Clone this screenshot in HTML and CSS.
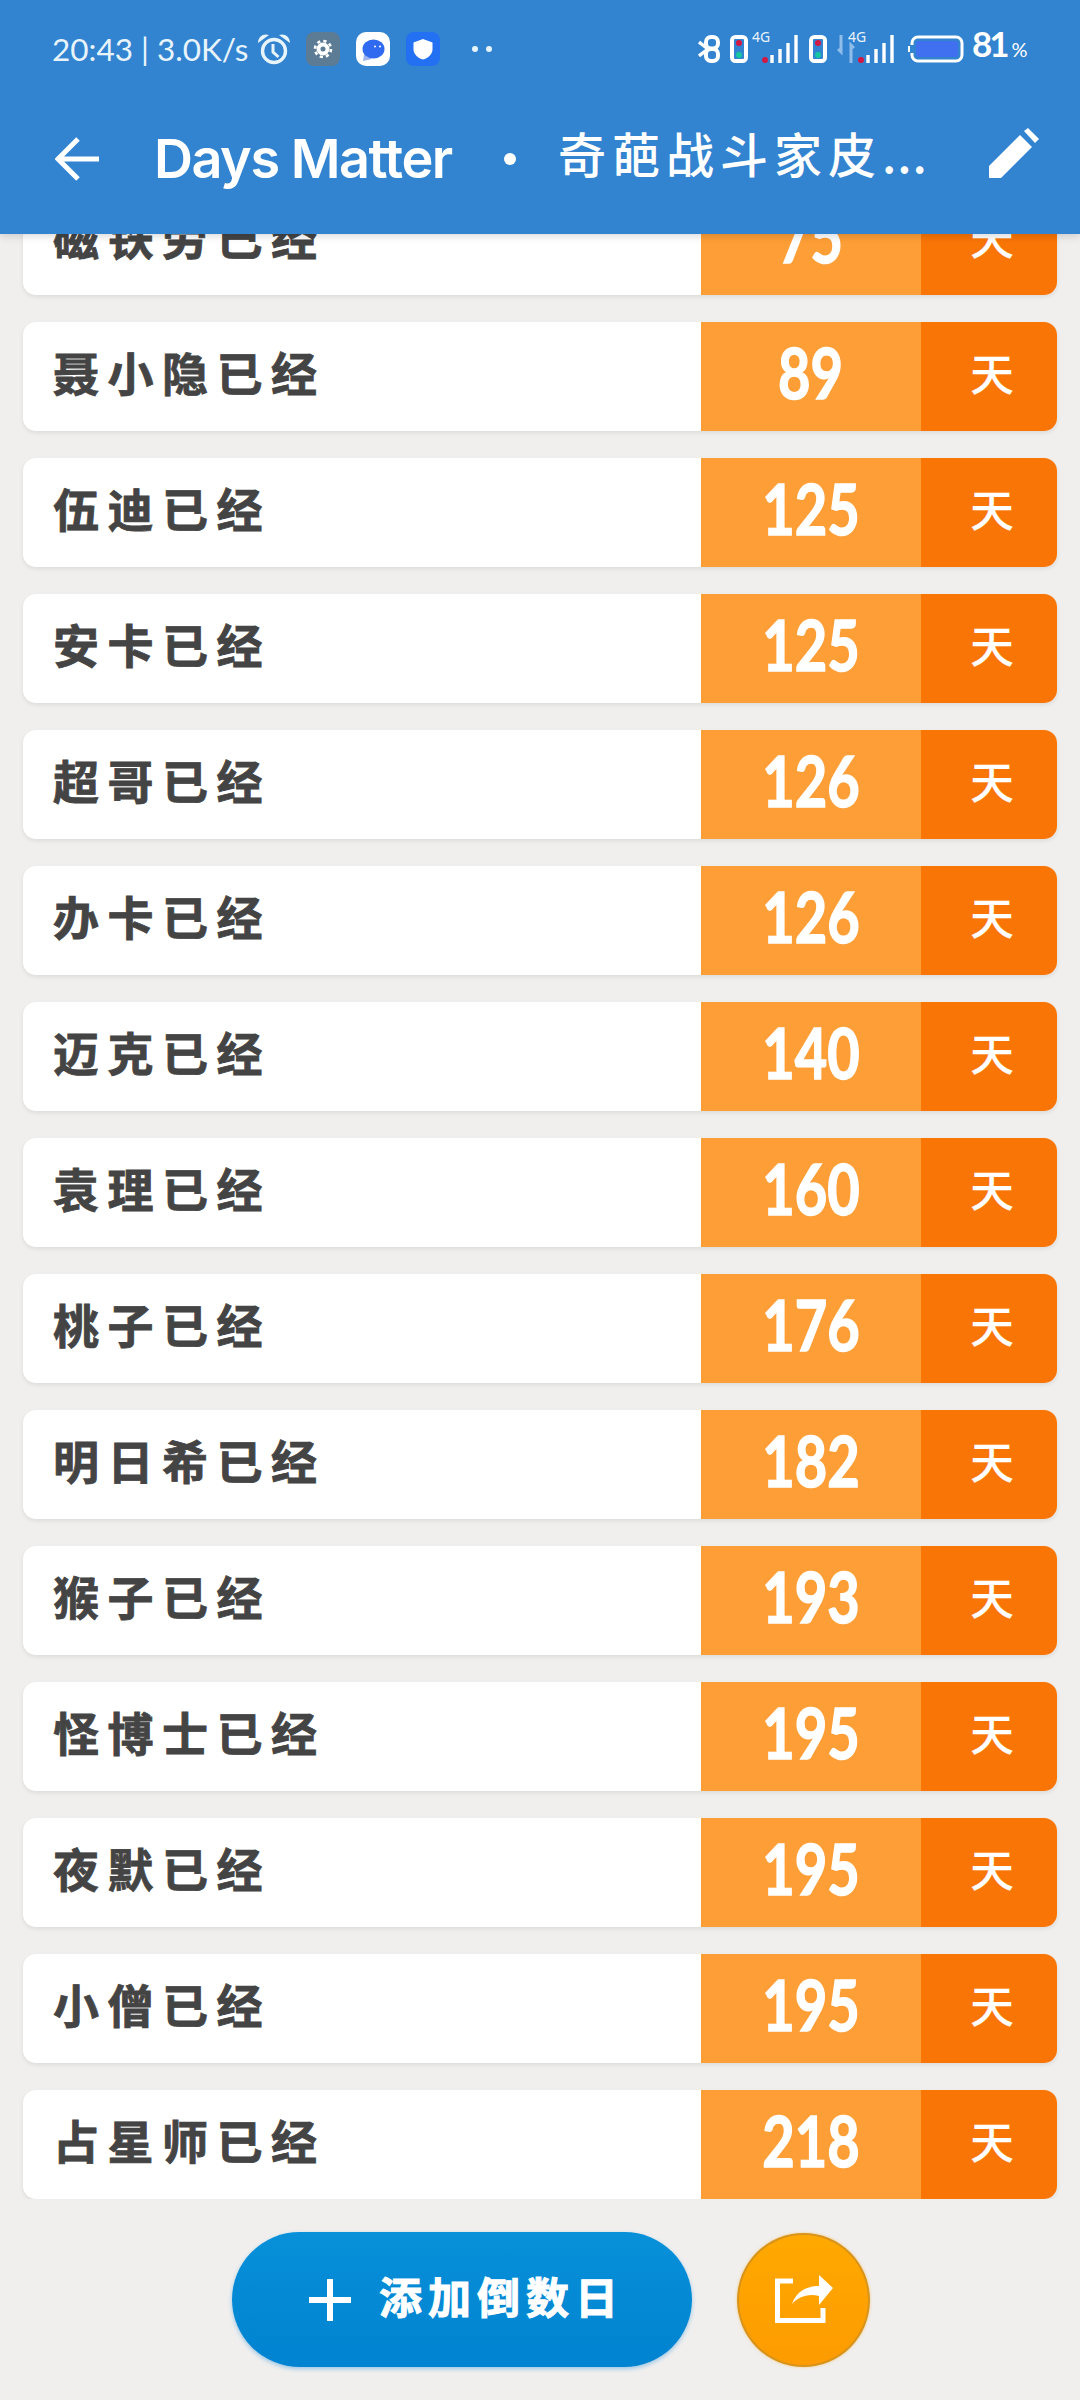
FILE: index.html
```html
<!DOCTYPE html>
<html lang="zh-CN">
<head>
<meta charset="utf-8">
<title>Days Matter</title>
<link rel="stylesheet" href="styles.css">
</head>
<body>
<div class="phone">
  <header class="header">
    <div class="status">
      <span class="clock">20:43 | 3.0K/s</span>
      <svg class="ic-alarm" viewBox="0 0 32 32"><circle cx="16" cy="18" r="11.500" fill="none" stroke="#e8f4fc" stroke-width="3.400"/><path d="M15 11v8l5.500 5" fill="none" stroke="#e8f4fc" stroke-width="3"/><path d="M0 10C0 3 6 0 11 2ZM32 10c0-7-6-10-11-8Z" fill="#e8f4fc"/></svg>
      <svg class="ic-badge ic-gear" viewBox="0 0 34 34"><rect width="34" height="34" rx="8" fill="#5c7b95"/><circle cx="17" cy="17" r="4.500" fill="none" stroke="#fff" stroke-width="4"/><circle cx="17" cy="17" r="8" fill="none" stroke="#fff" stroke-width="2.600" stroke-dasharray="3.200 3.100"/></svg>
      <svg class="ic-badge ic-chat" viewBox="0 0 34 34"><rect width="34" height="34" rx="10" fill="#fff"/><path d="M8 22l-1 7 9-2Z" fill="#9db4ee"/><ellipse cx="17.500" cy="17" rx="11" ry="9.500" fill="#2f6af0"/><circle cx="19" cy="14.500" r="1" fill="#fff"/><circle cx="24" cy="14.500" r="1" fill="#fff"/></svg>
      <svg class="ic-badge ic-shield" viewBox="0 0 34 34"><rect width="34" height="34" rx="8" fill="#2470f2"/><path d="M17 7l9.500 3.500v7c0 5-5 9-9.500 10-4.500-1-9.500-5-9.500-10v-7Z" fill="#fff"/></svg>
      <span class="more"><i></i><i></i></span>
      <span class="status-right">
        <svg class="ic-bt" viewBox="0 0 22 28"><path d="M1 7l9 7-9 7" fill="none" stroke="#fff" stroke-width="3.400"/><rect x="8" y="2" width="12" height="11.500" rx="5" fill="none" stroke="#fff" stroke-width="4"/><rect x="8" y="14" width="12" height="12" rx="5" fill="none" stroke="#fff" stroke-width="4"/></svg>
        <svg class="ic-sim" viewBox="0 0 18 28"><rect x="1.500" y="1.500" width="15" height="25" rx="4" fill="#fff" stroke="#fff" stroke-width="3"/><rect x="4" y="4" width="10" height="20" rx="1" fill="#3283d0"/><circle cx="9" cy="8" r="3" fill="#d41845"/><circle cx="9" cy="20" r="3" fill="#16c7a0"/></svg>
        <span class="net"><b>4G</b><svg class="ic-bars" viewBox="0 0 46 28"><circle cx="3" cy="25" r="3" fill="#d41845"/><path d="M10 28v-8M18 28v-14M26 28v-20M34 28v-28" stroke="#fff" stroke-width="3.400" fill="none"/></svg></span>
        <svg class="ic-sim" viewBox="0 0 18 28"><rect x="1.500" y="1.500" width="15" height="25" rx="4" fill="#fff" stroke="#fff" stroke-width="3"/><rect x="4" y="4" width="10" height="20" rx="1" fill="#3283d0"/><circle cx="9" cy="8" r="3" fill="#d41845"/><circle cx="9" cy="20" r="3" fill="#16c7a0"/></svg>
        <svg class="ic-arrows" viewBox="0 0 18 28"><path d="M4 0v17l-3-3M14 28v-18l3 3" stroke="#8fbdea" stroke-width="3" fill="none"/></svg>
        <span class="net net-b"><b>4G</b><svg class="ic-bars" viewBox="0 0 46 28"><circle cx="3" cy="25" r="3" fill="#d41845"/><path d="M10 28v-8M18 28v-14M26 28v-20M34 28v-28" stroke="#fff" stroke-width="3.400" fill="none"/></svg></span>
        <svg class="ic-batt" viewBox="0 0 56 28"><path d="M4 10V8a6 6 0 0 1 6-6h38a6 6 0 0 1 6 6v12a6 6 0 0 1-6 6H10a6 6 0 0 1-6-6v-2" fill="none" stroke="#fff" stroke-width="3"/><path d="M1 11v6" stroke="#fff" stroke-width="2"/><rect x="8" y="6" width="42" height="16" rx="3" fill="#4070f0"/></svg>
        <span class="pct">81<small>%</small></span>
      </span>
    </div>
    <div class="toolbar">
      <svg class="ic-back" viewBox="0 0 44 44"><path d="M2 22h42M23 2L3 22l20 20" fill="none" stroke="#fff" stroke-width="5"/></svg>
      <span class="app">Days Matter</span>
      <i class="sep"></i>
      <span class="book">奇葩战斗家皮<span class="dots">...</span></span>
      <svg class="ic-pen" viewBox="0 0 50 50"><path d="M0 50V38L31 7l12 12L12 50Z" fill="#fff"/><path d="M35 3l4-3 11 11-4 4Z" fill="#fff"/></svg>
    </div>
  </header>
  <main class="list">
    <div class="row"><span class="name">磁铁劳已经</span><span class="num"><span class="digits">75</span></span><span class="unit">天</span></div>
    <div class="row"><span class="name">聂小隐已经</span><span class="num"><span class="digits">89</span></span><span class="unit">天</span></div>
    <div class="row"><span class="name">伍迪已经</span><span class="num"><span class="digits">125</span></span><span class="unit">天</span></div>
    <div class="row"><span class="name">安卡已经</span><span class="num"><span class="digits">125</span></span><span class="unit">天</span></div>
    <div class="row"><span class="name">超哥已经</span><span class="num"><span class="digits">126</span></span><span class="unit">天</span></div>
    <div class="row"><span class="name">办卡已经</span><span class="num"><span class="digits">126</span></span><span class="unit">天</span></div>
    <div class="row"><span class="name">迈克已经</span><span class="num"><span class="digits">140</span></span><span class="unit">天</span></div>
    <div class="row"><span class="name">袁理已经</span><span class="num"><span class="digits">160</span></span><span class="unit">天</span></div>
    <div class="row"><span class="name">桃子已经</span><span class="num"><span class="digits">176</span></span><span class="unit">天</span></div>
    <div class="row"><span class="name">明日希已经</span><span class="num"><span class="digits">182</span></span><span class="unit">天</span></div>
    <div class="row"><span class="name">猴子已经</span><span class="num"><span class="digits">193</span></span><span class="unit">天</span></div>
    <div class="row"><span class="name">怪博士已经</span><span class="num"><span class="digits">195</span></span><span class="unit">天</span></div>
    <div class="row"><span class="name">夜默已经</span><span class="num"><span class="digits">195</span></span><span class="unit">天</span></div>
    <div class="row"><span class="name">小僧已经</span><span class="num"><span class="digits">195</span></span><span class="unit">天</span></div>
    <div class="row"><span class="name">占星师已经</span><span class="num"><span class="digits">218</span></span><span class="unit">天</span></div>
  </main>
  <footer class="actions">
    <button class="add"><svg class="ic-plus" viewBox="0 0 42 42"><path d="M21 0v42M0 21h42" stroke="#fff" stroke-width="6" fill="none"/></svg><span class="add-label">添加倒数日</span></button>
    <button class="share"><svg class="ic-share" viewBox="0 0 58 50"><path d="M18 6H2.500v39.500H48V33" fill="none" stroke="#fff" stroke-width="5"/><path d="M17 29C21 17 31 11 44 11V0l14 13-14 17v-9C33 18 23 22 17 29Z" fill="#fff"/></svg></button>
  </footer>
</div>
</body>
</html>
```
FILE: styles.css
```css
* { box-sizing: border-box; }
html, body { margin: 0; padding: 0; }
body { width: 1080px; height: 2400px; overflow: hidden; background: #f0efee; }
.phone { width: 1080px; height: 2400px; display: flex; flex-direction: column; font-family: "Noto Sans CJK SC", "Noto Sans", sans-serif; }

.header { position: relative; z-index: 2; height: 234px; flex: none; display: flex; flex-direction: column; background: #3283d0; box-shadow: 0 2px 8px rgba(0,0,0,.16); color: #fff; }
.status { display: flex; align-items: center; height: 34px; margin-top: 32px; padding-left: 52px; }
.clock { width: 206px; font: 400 31.500px/34px Lato, sans-serif; color: #e8f4fc; white-space: nowrap; }
.ic-alarm { width: 32px; height: 32px; margin-right: 16px; }
.ic-badge { width: 34px; height: 34px; margin-right: 16px; }
.more { display: flex; gap: 8px; margin-left: 16px; }
.more i { width: 6px; height: 6px; border-radius: 50%; background: #e8f4fc; }
.status-right { display: flex; align-items: flex-end; margin-left: 206px; height: 34px; }
.ic-bt { width: 22px; height: 28px; margin-bottom: 3px; margin-right: 10px; }
.ic-sim { width: 18px; height: 28px; margin-bottom: 3px; }
.net { position: relative; width: 46px; height: 28px; margin: 0 11px 3px 4px; }
.net b { position: absolute; left: 0; top: -5px; font: 400 14px/14px "Noto Sans", sans-serif; color: #e8f4fc; }
.ic-bars { position: absolute; left: 10px; top: 0; width: 46px; height: 28px; }
.net-b { margin-left: -7px; margin-right: 0; }
.ic-arrows { width: 18px; height: 28px; margin: 0 0 3px 10px; }
.ic-batt { width: 56px; height: 28px; margin-bottom: 3px; margin-left: 14px; }
.pct { font: 700 35px/34px Lato, sans-serif; letter-spacing: -3px; margin-left: 8px; white-space: nowrap; }
.pct small { font-size: 20px; margin-left: 5px; letter-spacing: 0; font-weight: 400; }

.toolbar { display: flex; align-items: center; height: 60px; margin-top: 63px; padding-left: 55px; }
.ic-back { width: 44px; height: 44px; margin-right: 55px; flex: none; }
.app { width: 299px; font: 600 54px/60px Inter, sans-serif; letter-spacing: -1.500px; white-space: nowrap; }
.sep { width: 12px; height: 12px; border-radius: 50%; background: #fff; margin-left: 51px; flex: none; }
.book { width: 372px; margin: -14px 0 0 42px; font: 500 48px/60px "Noto Sans CJK SC", sans-serif; letter-spacing: 6px; white-space: nowrap; }
.dots { letter-spacing: 1px; }
.ic-pen { width: 50px; height: 50px; margin: -12px 0 0 59px; flex: none; }

.list { flex: none; height: 2013px; margin-top: -48px; padding: 0 23px; display: flex; flex-direction: column; gap: 27px; overflow: hidden; }
.row { height: 109px; flex: none; display: flex; border-radius: 13px; background: #fff; box-shadow: 0 2px 4px rgba(0,0,0,.08); overflow: hidden; }
.name { width: 678px; padding: 0 0 12px 30px; display: flex; align-items: center; color: #444; font-weight: 700; font-size: 46px; letter-spacing: 8.500px; -webkit-text-stroke: .8px #444; }
.num { width: 220px; background: #fe9e36; display: flex; align-items: center; justify-content: center; }
.digits { display: block; color: #fff; font: 700 70px/80px Lato, sans-serif; -webkit-text-stroke: 1.500px #fff; transform: scaleX(.8); margin-top: -10px; }
.unit { width: 136px; background: #f97506; color: #fff; font-weight: 500; font-size: 44px; display: flex; align-items: center; justify-content: center; padding: 0 0 9px 6px; }

.actions { flex: none; display: flex; align-items: center; padding: 33px 0 0 232px; gap: 45px; }
.add { width: 460px; height: 135px; border: 0; border-radius: 68px; background: linear-gradient(#0890d9, #0083d0); box-shadow: 0 2px 4px rgba(30,140,220,.4); display: flex; align-items: center; justify-content: center; gap: 28px; padding: 0 0 0 9px; color: #fff; font: 700 43px/50px "Noto Sans CJK SC", sans-serif; letter-spacing: 6px; }
.add-label { margin-top: -10px; -webkit-text-stroke: 1px #fff; }
.ic-plus { width: 42px; height: 42px; flex: none; }
.share { width: 133px; height: 134px; border: 2px solid #d8931a; border-radius: 50%; background: linear-gradient(#ffa900, #fd9b00); box-shadow: 0 0 3px rgba(255,170,0,.5); display: flex; align-items: center; justify-content: center; padding: 0; }
.ic-share { width: 58px; height: 50px; }
```
